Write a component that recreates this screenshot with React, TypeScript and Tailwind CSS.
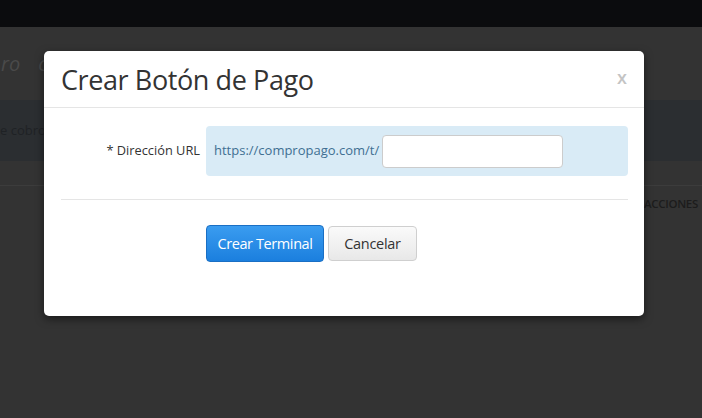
import React from "react";

export default function App() {
  return (
    <div
      className="relative w-[702px] h-[418px] overflow-hidden bg-[#333333]"
      style={{ fontFamily: '"Open Sans", "Liberation Sans", sans-serif' }}
    >
      {/* dimmed page behind */}
      <div className="h-[27px] bg-[#0b0c0e]" />
      <div className="h-[73px] flex items-center gap-[18px] text-[20px] text-[#4a4a4a] italic">
        <span className="pl-[1px]">ro</span>
        <span>c</span>
      </div>
      <div className="h-[61px] bg-[#2b2e31] flex items-center text-[13px] text-[#1f2225]">
        <span>e cobro</span>
      </div>
      <div className="h-[25px] border-b border-[#3c3c3c]" />
      <div className="flex justify-end pr-[4px] pt-[9px] text-[11.5px] font-semibold text-[#1c1c1c] tracking-[-0.3px]">
        ACCIONES
      </div>

      {/* modal */}
      <div className="absolute left-[44px] top-[51px] w-[600px] h-[265px] bg-white rounded-[5px] shadow-[0_3px_9px_rgba(0,0,0,0.5)]">
        <div className="h-[57px] border-b border-[#e5e5e5] flex items-center justify-between pl-[17px] pr-[17px]">
          <h3 className="text-[27px] text-[#333] tracking-[-0.4px] leading-none pt-[1px]">
            Crear Botón de Pago
          </h3>
          <span className="text-[18px] text-[#c4c4c4] font-semibold -mt-[3px]">x</span>
        </div>
        <div className="pt-[18px] pl-[17px] pr-[16px]">
          <div className="flex items-center">
            <label className="w-[145px] pr-[6px] text-right text-[12.8px] text-[#333]">
              * Dirección URL
            </label>
            <div className="flex-1 h-[50px] bg-[#d9ebf6] rounded-[4px] flex items-center pl-[8px]">
              <span className="text-[13px] text-[#3f6f92]">https://compropago.com/t/</span>
              <input className="ml-[3px] w-[181px] h-[33px] bg-white border border-[#cccccc] rounded-[4px] outline-none" />
            </div>
          </div>
          <div className="mt-[23px] border-t border-[#e5e5e5]" />
          <div className="flex items-center gap-[4px] pl-[145px] mt-[25px]">
            <button className="w-[118px] h-[37px] rounded-[4px] border border-[#1a6fc4] bg-[linear-gradient(#3a9cf0,#1b7fde)] text-white text-[14.5px] tracking-[-0.4px]">
              Crear Terminal
            </button>
            <button className="w-[89px] h-[35px] rounded-[4px] border border-[#cfcfcf] bg-[linear-gradient(#fafafa,#e8e8e8)] text-[#333] text-[14.5px] tracking-[-0.3px]">
              Cancelar
            </button>
          </div>
        </div>
      </div>
    </div>
  );
}
